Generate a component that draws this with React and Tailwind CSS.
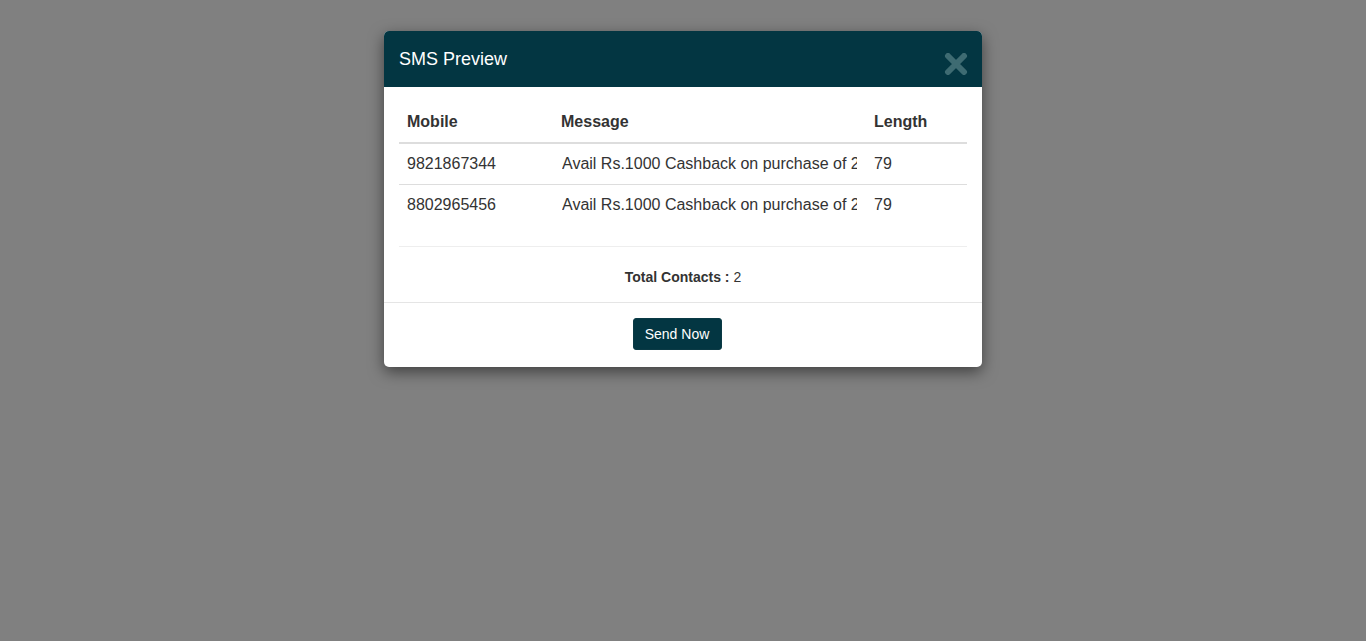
export default function App() {
  const rows = [
    { mobile: "9821867344", msg: "Avail Rs.1000 Cashback on purchase of 2 items from our new collection today", len: 79 },
    { mobile: "8802965456", msg: "Avail Rs.1000 Cashback on purchase of 2 items from our new collection today", len: 79 },
  ];
  return (
    <div className="w-full h-[641px] bg-[#808080] flex justify-center items-start pt-[31px]" style={{ fontFamily: '"Liberation Sans", Arial, sans-serif' }}>
      <div className="w-[598px] bg-white rounded-[5px] overflow-hidden shadow-[0_5px_15px_rgba(0,0,0,0.5)] text-[#333]">
        <div className="h-[56px] bg-[#033642] flex justify-between items-start px-[15px]">
          <h4 className="text-white text-[18px] leading-[26px] mt-[15px]">SMS Preview</h4>
          <div className="mt-[22px] mr-[-1px]">
            <svg width="24" height="22" viewBox="0 0 24 22">
              <path d="M4 3 L20 19 M20 3 L4 19" stroke="#3e6b72" strokeWidth="6" strokeLinecap="round" fill="none" />
            </svg>
          </div>
        </div>
        <div className="px-[15px] pt-[15px] pb-[15px]">
          <table className="w-[568px] table-fixed border-collapse text-[16px]">
            <colgroup>
              <col className="w-[154px]" />
              <col className="w-[313px]" />
              <col className="w-[101px]" />
            </colgroup>
            <thead>
              <tr>
                <th className="text-left font-bold p-[8px] leading-[24px] border-b-2 border-[#ddd]">Mobile</th>
                <th className="text-left font-bold p-[8px] leading-[24px] border-b-2 border-[#ddd]">Message</th>
                <th className="text-left font-bold p-[8px] leading-[24px] border-b-2 border-[#ddd]">Length</th>
              </tr>
            </thead>
            <tbody>
              {rows.map((r, i) => (
                <tr key={i}>
                  <td className={`p-[8px] leading-[24px] ${i > 0 ? "border-t border-[#ddd]" : ""}`}>{r.mobile}</td>
                  <td className={`p-[8px] leading-[24px] ${i > 0 ? "border-t border-[#ddd]" : ""}`}>
                    <div className="w-[295px] ml-[1px] overflow-hidden whitespace-nowrap">{r.msg}</div>
                  </td>
                  <td className={`p-[8px] leading-[24px] ${i > 0 ? "border-t border-[#ddd]" : ""}`}>{r.len}</td>
                </tr>
              ))}
            </tbody>
          </table>
          <div className="mt-[21px] border-t border-[#eee]" />
          <div className="mt-[20px] text-center text-[14px] leading-[20px]">
            <span className="font-bold">Total Contacts : </span>2
          </div>
        </div>
        <div className="border-t border-[#e5e5e5] flex justify-center pt-[15px] pb-[17px]">
          <button className="h-[32px] w-[89px] mr-[12px] bg-[#033642] border border-[#0b3a45] rounded-[3px] text-white text-[14px] leading-[20px]">Send Now</button>
        </div>
      </div>
    </div>
  );
}
